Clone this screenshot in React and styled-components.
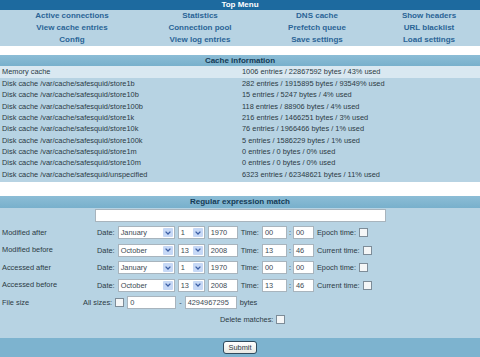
import styled, { createGlobalStyle } from "styled-components";

const GlobalStyle = createGlobalStyle`
    html, body {
        margin: 0;
        padding: 0;
        background: #ffffff;
        font-family: "Liberation Sans", Arial, sans-serif;
        font-size: 7.4px;
        color: #2b3a44;
    }
`;

const Page = styled.div`
    width: 480px;
    display: flex;
    flex-direction: column;
`;

const Section = styled.div`
    display: flex;
    flex-direction: column;
    background: #b7d3e3;
    margin-bottom: ${(p) => p.gap || 0}px;
`;

const TopBar = styled.div`
    height: 10px;
    line-height: 10px;
    background: #1d6a9f;
    color: #ffffff;
    font-weight: bold;
    font-size: 8px;
    text-align: center;
`;

const HeadBar = styled.div`
    height: ${(p) => p.h || 11}px;
    line-height: ${(p) => p.h || 11}px;
    background: linear-gradient(#8cbdd6, #78b0cc);
    color: #143a55;
    font-weight: bold;
    font-size: 8px;
    text-align: center;
`;

const MenuGrid = styled.div`
    display: grid;
    grid-template-columns: 144px 112px 122px 102px;
    grid-auto-rows: 12px;
`;

const MenuLink = styled.a`
    text-align: center;
    line-height: 12px;
    font-weight: bold;
    font-size: 8px;
    color: #2a6496;
    text-decoration: none;
`;

const CacheRow = styled.div`
    display: grid;
    grid-template-columns: 240px 1fr;
    height: ${(p) => (p.first ? 12 : 11.33)}px;
    line-height: ${(p) => (p.first ? 12 : 11.33)}px;
    background: ${(p) => (p.first ? "#d9e8f1" : "transparent")};
    padding-left: 2px;
`;

const Cell = styled.span`
    white-space: nowrap;
`;

const FormGrid = styled.div`
    display: grid;
    grid-template-columns: 93px 1fr;
    align-items: center;
`;

const Label = styled.div`
    padding-left: 2px;
    height: ${(p) => p.h}px;
    line-height: ${(p) => p.h}px;
`;

const Controls = styled.div`
    display: flex;
    align-items: center;
    height: ${(p) => p.h}px;
    padding-left: ${(p) => p.pad || 0}px;
    gap: 3px;
`;

const SizeLabel = styled.span`
    margin-left: -10px;
`;

const TextBox = styled.div`
    box-sizing: border-box;
    width: ${(p) => p.w}px;
    height: ${(p) => p.ht || 13}px;
    line-height: ${(p) => (p.ht || 13) - 2}px;
    background: #ffffff;
    border: 1px solid #a8b4bd;
    padding-left: 2px;
    color: #3b4a54;
    flex-shrink: 0;
`;

const SelectBox = styled.div`
    box-sizing: border-box;
    width: ${(p) => p.w}px;
    height: 13px;
    display: flex;
    align-items: center;
    justify-content: space-between;
    background: #ffffff;
    border: 1px solid #a8b4bd;
    padding: 0 1px 0 2px;
    color: #3b4a54;
    flex-shrink: 0;
`;

const Arrow = styled.span`
    width: 10px;
    height: 9px;
    background: #c6d8f6;
    border-radius: 1px;
    display: flex;
    align-items: center;
    justify-content: center;
`;

const Check = styled.span`
    box-sizing: border-box;
    width: 9px;
    height: 9px;
    background: #f4f6f7;
    border: 1px solid #7d8c98;
    display: inline-block;
    flex-shrink: 0;
`;

const Sep = styled.span`
    margin: 0 -1px;
`;

const Spacer = styled.div`
    height: ${(p) => p.h}px;
`;

const BottomBar = styled.div`
    height: 19px;
    background: #7db3cf;
    display: flex;
    align-items: center;
    justify-content: center;
`;

const SubmitButton = styled.button`
    font-family: "Liberation Sans", Arial, sans-serif;
    font-size: 7.4px;
    height: 13px;
    padding: 0 4px;
    border: 1px solid #2f4a5c;
    border-radius: 3px;
    background: linear-gradient(#ffffff, #e8e8e2);
    color: #2b3a44;
    line-height: 11px;
`;

const Chevron = () => (
    <Arrow>
        <svg width="6" height="4" viewBox="0 0 6 4">
            <path d="M0.6 0.6 L3 3 L5.4 0.6" fill="none" stroke="#3d5fa5" strokeWidth="1.3" />
        </svg>
    </Arrow>
);

const menu = [
    "Active connections", "Statistics", "DNS cache", "Show headers",
    "View cache entries", "Connection pool", "Prefetch queue", "URL blacklist",
    "Config", "View log entries", "Save settings", "Load settings",
];

const cache = [
    ["Memory cache", "1006 entries / 22867592 bytes / 43% used"],
    ["Disk cache /var/cache/safesquid/store1b", "282 entries / 1915895 bytes / 93549% used"],
    ["Disk cache /var/cache/safesquid/store10b", "15 entries / 5247 bytes / 4% used"],
    ["Disk cache /var/cache/safesquid/store100b", "118 entries / 88906 bytes / 4% used"],
    ["Disk cache /var/cache/safesquid/store1k", "216 entries / 1466251 bytes / 3% used"],
    ["Disk cache /var/cache/safesquid/store10k", "76 entries / 1966466 bytes / 1% used"],
    ["Disk cache /var/cache/safesquid/store100k", "5 entries / 1586229 bytes / 1% used"],
    ["Disk cache /var/cache/safesquid/store1m", "0 entries / 0 bytes / 0% used"],
    ["Disk cache /var/cache/safesquid/store10m", "0 entries / 0 bytes / 0% used"],
    ["Disk cache /var/cache/safesquid/unspecified", "6323 entries / 62348621 bytes / 11% used"],
];

const dates = [
    ["Modified after", "January", "1", "1970", "00", "00", "Epoch time:"],
    ["Modified before", "October", "13", "2008", "13", "46", "Current time:"],
    ["Accessed after", "January", "1", "1970", "00", "00", "Epoch time:"],
    ["Accessed before", "October", "13", "2008", "13", "46", "Current time:"],
];

const DateRow = ({ row }) => {
    const [label, month, day, year, hh, mm, note] = row;
    return (
        <>
            <Label h={17.5}>{label}</Label>
            <Controls h={17.5} pad={4}>
                <span>Date:</span>
                <SelectBox w={57}>{month}<Chevron /></SelectBox>
                <SelectBox w={27}>{day}<Chevron /></SelectBox>
                <TextBox w={30}>{year}</TextBox>
                <span>Time:</span>
                <TextBox w={25}>{hh}</TextBox>
                <Sep>:</Sep>
                <TextBox w={21}>{mm}</TextBox>
                <span>{note}</span>
                <Check />
            </Controls>
        </>
    );
};

const App = () => {
    return (
        <>
            <GlobalStyle />
            <Page>
                <Section gap={9}>
                    <TopBar>Top Menu</TopBar>
                    <MenuGrid>
                        {menu.map((m) => (
                            <MenuLink key={m} href="#">{m}</MenuLink>
                        ))}
                    </MenuGrid>
                </Section>

                <Section gap={14}>
                    <HeadBar>Cache information</HeadBar>
                    {cache.map(([a, b], i) => (
                        <CacheRow key={a} first={i === 0}>
                            <Cell>{a}</Cell>
                            <Cell>{b}</Cell>
                        </CacheRow>
                    ))}
                    <Spacer h={2} />
                </Section>

                <Section>
                    <HeadBar h={12}>Regular expression match</HeadBar>
                    <FormGrid>
                        <Label h={16} />
                        <Controls h={16} pad={2}>
                            <TextBox w={291} ht={13} />
                        </Controls>
                        {dates.map((r) => (
                            <DateRow key={r[0]} row={r} />
                        ))}
                        <Label h={17}>File size</Label>
                        <Controls h={17}>
                            <SizeLabel>All sizes:</SizeLabel>
                            <Check />
                            <TextBox w={49}>0</TextBox>
                            <span>-</span>
                            <TextBox w={52}>4294967295</TextBox>
                            <span>bytes</span>
                        </Controls>
                    </FormGrid>
                    <Controls h={18} pad={220}>
                        <span>Delete matches:</span>
                        <Check />
                    </Controls>
                    <Spacer h={9} />
                    <BottomBar>
                        <SubmitButton>Submit</SubmitButton>
                    </BottomBar>
                </Section>
            </Page>
        </>
    );
};

export default App;
